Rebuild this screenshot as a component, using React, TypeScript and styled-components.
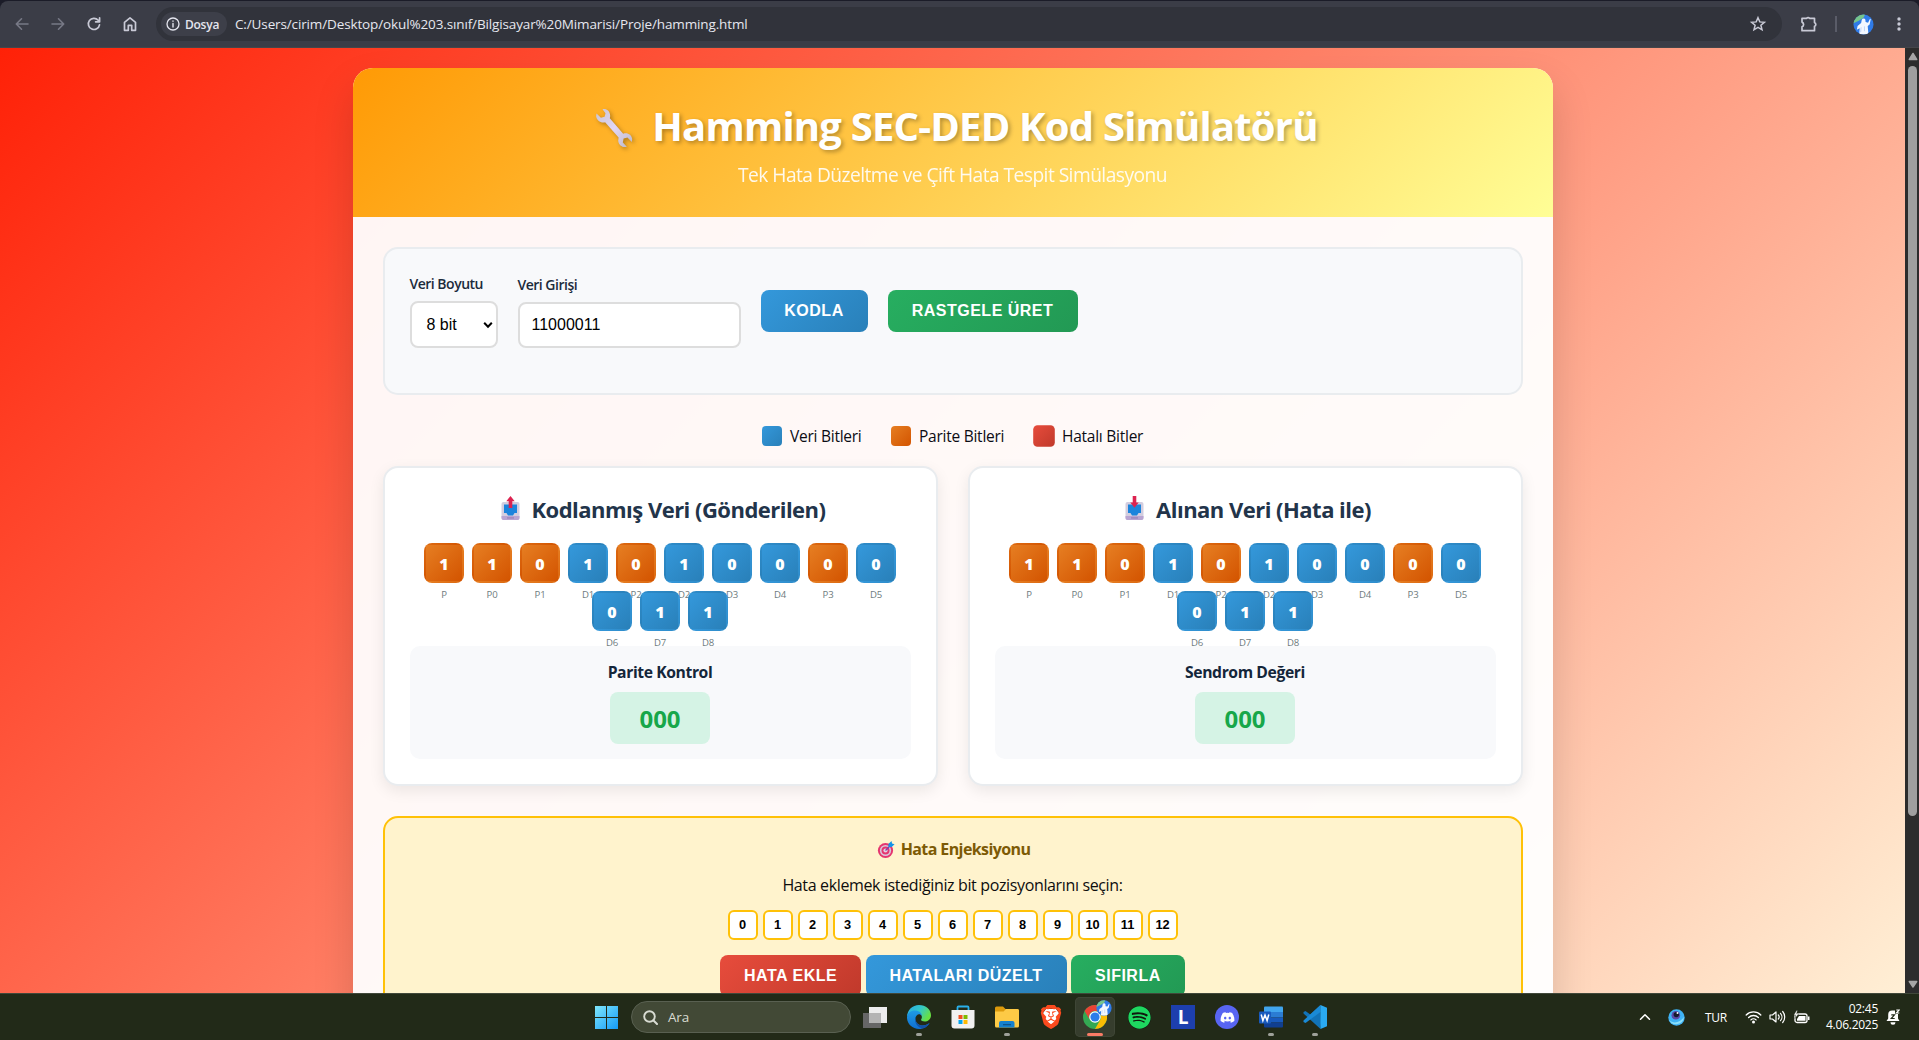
import React from "react";
import styled, { createGlobalStyle, css } from "styled-components";
import { FaSpotify, FaDiscord } from "react-icons/fa";
import { SiBrave } from "react-icons/si";

const ui = `"Open Sans", "Noto Sans", sans-serif`;
const arial = `"Liberation Sans", Arial, sans-serif`;

const blue = "linear-gradient(135deg, #3498db, #2980b9)";
const orange = "linear-gradient(135deg, #e67e22, #d35400)";
const red = "linear-gradient(135deg, #e74c3c, #c0392b)";
const green = "linear-gradient(135deg, #27ae60, #229954)";

const GlobalStyle = createGlobalStyle`
  * { box-sizing: border-box; margin: 0; padding: 0; }
  body { margin: 0; overflow: hidden; font-family: ${ui}; }
  svg { display: block; flex: none; }
`;

const Screen = styled.div`
  width: 1919px;
  height: 1040px;
  display: flex;
  flex-direction: column;
  overflow: hidden;
  background: #1b1c28;
`;

/* ---------- browser toolbar ---------- */

const BrowserBar = styled.header`
  height: 47px;
  margin-top: 1px;
  display: flex;
  align-items: center;
  background: #3b3d47;
  border-radius: 8px 8px 0 0;
  color: #c9cad6;
  border-bottom: 1px solid #45464a;
`;
const NavButtons = styled.nav`
  display: flex;
  align-items: center;
  gap: 16px;
  padding: 0 16px 0 12px;
`;
const AddressBar = styled.div`
  width: 1626px;
  height: 34px;
  border-radius: 17px;
  background: #31333b;
  display: flex;
  align-items: center;
  padding: 0 14px 0 5px;
  margin-right: 16px;
`;
const FileChip = styled.span`
  width: 66px;
  height: 24px;
  border-radius: 12px;
  background: #3d3f49;
  display: flex;
  align-items: center;
  gap: 5px;
  padding-left: 5px;
  font-size: 12px;
  font-weight: 600;
  letter-spacing: -0.25px;
  color: #e4e5ee;
`;
const Url = styled.span`
  flex: 1;
  margin-left: 8px;
  font-size: 13.5px;
  letter-spacing: -0.13px;
  color: #e6e7ef;
`;
const BarDivider = styled.i`
  width: 2px;
  height: 16px;
  margin: 0 16px 0 16px;
  background: #5a5c68;
`;
const MenuSlot = styled.span`
  margin-left: 19px;
`;

/* ---------- page ---------- */

const Viewport = styled.div`
  height: 945px;
  display: flex;
`;
const Page = styled.main`
  flex: 1;
  overflow: hidden;
  padding-top: 20px;
  background: linear-gradient(135deg, #ff2107 0%, #ffefd5 100%);
`;
const Container = styled.div`
  width: 1200px;
  height: 1250px;
  margin: 0 auto;
  border-radius: 20px;
  overflow: hidden;
  background: rgba(255, 255, 255, 0.95);
  box-shadow: 0 20px 40px rgba(0, 0, 0, 0.15);
`;
const Banner = styled.div`
  height: 149px;
  padding-top: 31px;
  background: linear-gradient(135deg, #ff9a05, #fffe96);
  color: #fff;
`;
const BannerTitle = styled.h1`
  display: flex;
  align-items: center;
  justify-content: center;
  gap: 11px;
  font-size: 40px;
  line-height: 53px;
  font-weight: 700;
  letter-spacing: -0.8px;
  text-shadow: 2px 2px 4px rgba(0, 0, 0, 0.3);
  & svg { filter: drop-shadow(2px 2px 2px rgba(0, 0, 0, 0.3)); }
`;
const BannerSubtitle = styled.p`
  margin-top: 10px;
  text-align: center;
  font-size: 19.2px;
  line-height: 26px;
  letter-spacing: -0.54px;
  opacity: 0.9;
`;
const Content = styled.div`
  padding: 30px;
`;
const Controls = styled.section`
  height: 148px;
  padding: 25px;
  border: 2px solid #e9ecef;
  border-radius: 15px;
  background: #f8f9fb;
  display: flex;
  align-items: flex-start;
  gap: 20px;
`;
const Field = styled.div<{ $w: number; $top?: number }>`
  width: ${(p) => p.$w}px;
  padding-top: ${(p) => p.$top ?? 0}px;
  display: flex;
  flex-direction: column;
  gap: 8px;
`;
const Label = styled.label`
  font-size: 14px;
  line-height: 19px;
  font-weight: 600;
  letter-spacing: -0.5px;
  color: #1c2b3c;
`;
const fieldBox = css`
  border: 2px solid #ddd;
  border-radius: 8px;
  background: #fff;
  font-family: ${arial};
  font-size: 16px;
  color: #000;
`;
const SelectBox = styled.div`
  ${fieldBox}
  height: 47px;
  padding: 0 3px 0 15px;
  display: flex;
  align-items: center;
  justify-content: space-between;
`;
const TextInput = styled.input`
  ${fieldBox}
  width: 100%;
  height: 46px;
  padding: 0 12px;
  outline: none;
`;
const Button = styled.button<{ $bg: string; $w: number; $top?: number }>`
  width: ${(p) => p.$w}px;
  height: 42px;
  margin-top: ${(p) => p.$top ?? 0}px;
  border: none;
  border-radius: 8px;
  background: ${(p) => p.$bg};
  color: #fff;
  font: 700 16px ${arial};
  letter-spacing: 0.5px;
  white-space: nowrap;
`;
const Legend = styled.div`
  height: 21px;
  margin: 30px 0 20px;
  display: flex;
  align-items: center;
  justify-content: center;
  gap: 30px;
`;
const LegendItem = styled.span<{ $w: number }>`
  width: ${(p) => p.$w}px;
  display: flex;
  align-items: center;
  gap: 8px;
  font-size: 15.5px;
  letter-spacing: -0.25px;
  white-space: nowrap;
  color: #0c0c14;
`;
const Swatch = styled.i<{ $bg: string; $pulse?: boolean }>`
  flex: none;
  width: 20px;
  height: 20px;
  border-radius: 4px;
  background: ${(p) => p.$bg};
  transform: ${(p) => (p.$pulse ? "scale(1.08)" : "none")};
`;
const Cards = styled.div`
  display: grid;
  grid-template-columns: 1fr 1fr;
  gap: 30px;
`;
const Card = styled.section`
  height: 320px;
  padding: 26px 25px 25px;
  border: 2px solid #e9ecef;
  border-radius: 15px;
  background: #fff;
  box-shadow: 0 5px 15px rgba(0, 0, 0, 0.08);
`;
const CardTitle = styled.h2`
  display: flex;
  align-items: center;
  justify-content: center;
  gap: 6px;
  font-size: 22px;
  line-height: 30px;
  font-weight: 700;
  letter-spacing: -0.52px;
  color: #22344a;
  white-space: nowrap;
`;
const Bits = styled.div`
  display: flex;
  flex-wrap: wrap;
  justify-content: center;
  gap: 8px;
  margin: 19px 0 15px;
`;
const Bit = styled.div<{ $bg: string }>`
  position: relative;
  width: 40px;
  height: 40px;
  padding-top: 2px;
  border: 2px solid transparent;
  border-radius: 8px;
  background: ${(p) => p.$bg};
  display: flex;
  align-items: center;
  justify-content: center;
  font-size: 16px;
  font-weight: 800;
  color: #fff;
`;
const BitName = styled.small`
  position: absolute;
  left: 50%;
  top: 43px;
  transform: translateX(-50%);
  font-size: 9.6px;
  line-height: 13px;
  font-weight: 400;
  letter-spacing: -0.2px;
  color: #6f7c7e;
`;
const Panel = styled.div`
  height: 113px;
  padding: 16px 15px 15px;
  border-radius: 10px;
  background: #f8f9fb;
  display: flex;
  flex-direction: column;
  align-items: center;
  gap: 9px;
`;
const PanelTitle = styled.h3`
  font-size: 15.7px;
  line-height: 21px;
  font-weight: 700;
  letter-spacing: -0.4px;
  color: #14263a;
`;
const Syndrome = styled.div`
  width: 100px;
  height: 52px;
  border-radius: 8px;
  background: #d5f3e5;
  color: #17a74a;
  font-size: 24px;
  font-weight: 700;
  line-height: 54px;
  text-align: center;
`;
const Injection = styled.section`
  height: 300px;
  margin-top: 30px;
  padding: 21px 20px 20px;
  border: 2px solid #ffc107;
  border-radius: 15px;
  background: #fff3cd;
`;
const InjectionTitle = styled.h3`
  display: flex;
  align-items: center;
  justify-content: center;
  gap: 4px;
  font-size: 16px;
  line-height: 21px;
  font-weight: 700;
  letter-spacing: -0.6px;
  color: #7d5a05;
`;
const InjectionHint = styled.p`
  margin: 15px 0 14px;
  text-align: center;
  font-size: 16px;
  line-height: 21px;
  letter-spacing: -0.36px;
  color: #0d0d0d;
`;
const Row = styled.div<{ $gap: number }>`
  display: flex;
  justify-content: center;
  gap: ${(p) => p.$gap}px;
  margin-bottom: 15px;
`;
const PositionButton = styled.button`
  width: 30px;
  height: 30px;
  border: 2px solid #ffc107;
  border-radius: 6px;
  background: #fff;
  font: 700 12.8px/24px ${arial};
  padding-bottom: 1px;
  color: #000;
`;

/* ---------- scrollbar ---------- */

const Scrollbar = styled.aside`
  width: 14px;
  background: #2c2c2c;
  display: flex;
  flex-direction: column;
  align-items: center;
  padding: 4px 0 4px 1px;
`;
const Thumb = styled.div`
  width: 9px;
  height: 750px;
  margin: 5px 0 auto;
  border-radius: 5px;
  background: #9f9f9f;
`;

/* ---------- taskbar ---------- */

const Taskbar = styled.footer`
  height: 47px;
  display: flex;
  align-items: center;
  background: #222a18;
  border-top: 1px solid #41483a;
  color: #fff;
  padding: 0 19px 0 595px;
`;
const SearchBox = styled.div`
  width: 220px;
  height: 32px;
  margin: 0 2px 0 13px;
  padding-left: 11px;
  border-radius: 16px;
  border: 1px solid #596051;
  background: #424936;
  display: flex;
  align-items: center;
  gap: 10px;
  font-size: 13.5px;
  color: #d8dbd2;
  letter-spacing: -0.2px;
`;
const AppSlot = styled.div<{ $active?: boolean }>`
  position: relative;
  width: 40px;
  height: 40px;
  margin: 0 2px;
  border-radius: 5px;
  display: flex;
  align-items: center;
  justify-content: center;
  background: ${(p) => (p.$active ? "#363d2d" : "transparent")};
  box-shadow: ${(p) => (p.$active ? "inset 0 0 0 1px #3f4636" : "none")};
`;
const RunningMark = styled.i<{ $active?: boolean }>`
  position: absolute;
  bottom: 1px;
  width: ${(p) => (p.$active ? 16 : 6)}px;
  height: 3px;
  border-radius: 2px;
  background: ${(p) => (p.$active ? "#f97c66" : "#9fa19a")};
`;
const Avatar = styled.span`
  position: absolute;
  right: 3px;
  top: 3px;
`;
const LetterTile = styled.span`
  width: 24px;
  height: 24px;
  background: #1d3fae;
  color: #fff;
  font: 700 19px/24px ${ui};
  text-align: center;
`;
const Disc = styled.span<{ $size: number; $bg: string; $fg: string }>`
  display: flex;
  align-items: center;
  justify-content: center;
  width: ${(p) => p.$size}px;
  height: ${(p) => p.$size}px;
  border-radius: 50%;
  background: ${(p) => p.$bg};
  color: ${(p) => p.$fg};
`;
const Tray = styled.div`
  margin-left: auto;
  display: flex;
  align-items: center;
`;
const TrayItem = styled.span<{ $ml: number }>`
  margin-left: ${(p) => p.$ml}px;
`;
const Language = styled.span`
  width: 22px;
  margin-left: 20px;
  font-size: 12px;
  letter-spacing: -0.3px;
`;
const Clock = styled.div`
  width: 52px;
  margin: 0 8px 0 16px;
  text-align: right;
  font-size: 12px;
  line-height: 16px;
  letter-spacing: -0.25px;
  white-space: nowrap;
`;

/* ---------- drawings ---------- */

const line = {
  fill: "none",
  stroke: "currentColor",
  strokeLinecap: "round" as const,
  strokeLinejoin: "round" as const,
};

const Face = ({ size }: { size: number }) => (
  <svg width={size} height={size} viewBox="0 0 22 22">
    <defs>
      <clipPath id={`face${size}`}><circle cx="11" cy="11" r="10.5" /></clipPath>
    </defs>
    <g clipPath={`url(#face${size})`}>
      <rect width="22" height="22" fill="#2f7be8" />
      <path d="M0 0h13l-2 4-5 3-6 3z" fill="#77c58a" />
      <path d="M9.200 6a2 2 0 0 1 3.800 0l.2 2.500 2.600.6 2-4.100.8.6-1.200 5.400-2 1.500.8 9H6.500l.5-6.500-3 1.500.8-4 3.700-3z" fill="#f3f7ff" />
      <path d="M8.500 14l-.5 5M12 13v5" stroke="#bdd3f7" />
    </g>
  </svg>
);

const Wrench = () => (
  <svg width="54" height="44" viewBox="0 0 54 44">
    <defs>
      <linearGradient id="wr" x1="0" y1="0" x2="1" y2="1">
        <stop offset="0" stopColor="#c9c4d2" />
        <stop offset=".5" stopColor="#e2d6f4" />
        <stop offset="1" stopColor="#bdb9c8" />
      </linearGradient>
    </defs>
    <path d="M15.500 5.200c4-1 8.200 2.400 7.600 7.500l-.3 1.500 13.400 15.600c4.200-1.500 8.600 1 9 5.500l-.4 2.800-4.300-4.600-3.900 1-.8 4 4 4.300c-4 1.200-8-1.500-8.600-5.800l.4-3.400L18.100 18.200c-4.200 1-8.500-1.700-9-6.300l.4-2.400 4.400 4.200 3.700-1 .9-3.500z" fill="url(#wr)" />
  </svg>
);

const Tray3D = ({ up }: { up?: boolean }) => (
  <svg width="31" height="26" viewBox="0 0 31 26">
    <rect x="6.500" y="6" width="18" height="18" rx="2" fill="#d3cddf" />
    <path d="M6.500 20h18v2a2 2 0 0 1-2 2h-14a2 2 0 0 1-2-2z" fill="#b9a5d2" />
    <path d="M9 8.500h13V17h-2.500L18 19.500h-5L11.500 17H9z" fill="#1c84dc" />
    <path d="M12 21.500h7v.9h-7z" fill="#8c74ad" />
    {up ? (
      <path d="M15.500 0l4.200 5.200h-2.400V12h-3.600V5.200h-2.400z" fill="#dc2350" />
    ) : (
      <path d="M13.700 0h3.600v6.500h2.400l-4.200 5.200-4.200-5.200h2.400z" fill="#dc2350" />
    )}
  </svg>
);

const Target = () => (
  <svg width="22" height="20" viewBox="0 0 22 20">
    <circle cx="10.500" cy="10.500" r="7.600" fill="#e5356f" />
    <circle cx="10.500" cy="10.500" r="5.600" fill="#d9c9dc" />
    <circle cx="10.500" cy="10.500" r="4" fill="#e5356f" />
    <circle cx="10.500" cy="10.500" r="2.100" fill="#e4cfe0" />
    <path d="M10.500 10.500l5-5" stroke="#7c3fb0" strokeWidth="1.300" />
    <path d="M13.300 6.800l.3-3L16.500 1l.6 2.400 2.500.8-2.900 2.900z" fill="#1593e6" />
  </svg>
);

const EdgeLogo = () => (
  <svg width="24" height="24" viewBox="0 0 24 24">
    <defs>
      <linearGradient id="e1" x1="0" y1="0" x2="1" y2=".5">
        <stop offset="0" stopColor="#2aa9e8" />
        <stop offset=".55" stopColor="#33c8c8" />
        <stop offset="1" stopColor="#67e043" />
      </linearGradient>
      <linearGradient id="e2" x1="0" y1="0" x2="0" y2="1">
        <stop offset="0" stopColor="#1e9be6" />
        <stop offset="1" stopColor="#0f6fd0" />
      </linearGradient>
    </defs>
    <path d="M0 11.500C.4 5 5.400 0 12 0c7 0 12 4.700 12 10.200 0 4-3 6.300-6.300 6.300-2.700 0-4-1.100-3.500-2.200 1.800-2.900 0-6-4-6.300C5.500 7.800 1.500 9 0 11.500z" fill="url(#e1)" />
    <path d="M0 12c.5-4.600 4.800-7.200 9-6.500 3.600.5 6 3 5.900 5.500-1-1.800-3.600-2.300-5.200-.6-3 3-.5 9.600 5.300 10 3 .2 5.300-1 7.600-2.400C20.400 21.800 16.500 24 12 24 5.200 24-.3 18.600 0 12z" fill="url(#e2)" />
    <path d="M9.600 10.400c-3 3-.5 9.600 5.400 10 3 .2 5.300-1 7.600-2.400-1.600 3-4 4.700-6.700 5.500C9.500 23 5.500 14.500 9.600 10.400z" fill="#1250a8" />
  </svg>
);

const StoreLogo = () => (
  <svg width="24" height="24" viewBox="0 0 24 24">
    <path d="M6.500 6V2.500a1 1 0 0 1 1-1h9a1 1 0 0 1 1 1V6" fill="none" stroke="#29b0ea" strokeWidth="1.800" />
    <path d="M.5 5h23v15.500a3 3 0 0 1-3 3h-17a3 3 0 0 1-3-3z" fill="#f1f1f1" />
    <path d="M7.500 10h4v4h-4z" fill="#f25022" />
    <path d="M12.500 10h4v4h-4z" fill="#7fba00" />
    <path d="M7.500 15h4v4h-4z" fill="#00a4ef" />
    <path d="M12.500 15h4v4h-4z" fill="#ffb900" />
  </svg>
);

const FolderLogo = () => (
  <svg width="24" height="24" viewBox="0 0 24 24">
    <path d="M0 3a1.500 1.500 0 0 1 1.500-1.500H8L10.500 4H22a2 2 0 0 1 2 2v3H0z" fill="#dc9a0c" />
    <path d="M0 6.500h8.500L11 4h11.500A1.500 1.500 0 0 1 24 5.500V21a1.500 1.500 0 0 1-1.500 1.500h-21A1.500 1.500 0 0 1 0 21z" fill="#fdca46" />
    <path d="M4 22.500V18a2 2 0 0 1 2-2h11.500a2 2 0 0 1 2 2v4.500z" fill="#1581cf" />
    <path d="M8 19h8v1.300H8z" fill="#0b568f" />
  </svg>
);

const ChromeLogo = () => (
  <svg width="24" height="24" viewBox="0 0 24 24">
    <circle cx="12" cy="12" r="12" fill="#34a853" />
    <path d="M1.600 6A12 12 0 0 1 22.400 6H12a6 6 0 0 0-5.200 9z" fill="#ea4335" />
    <path d="M22.400 6A12 12 0 0 1 12 24l5.200-9A6 6 0 0 0 12 6z" fill="#fbbc05" />
    <circle cx="12" cy="12" r="5.800" fill="#fff" />
    <circle cx="12" cy="12" r="4.600" fill="#2b7de9" />
  </svg>
);

const WordLogo = () => (
  <svg width="24" height="24" viewBox="0 0 24 24">
    <path d="M6 1.500h17a1 1 0 0 1 1 1V7H5V2.500a1 1 0 0 1 1-1z" fill="#41a5ee" />
    <path d="M5 7h19v5.500H5z" fill="#2b7cd3" />
    <path d="M5 12.500h19v5H5z" fill="#185abd" />
    <path d="M5 17.500h19v4a1 1 0 0 1-1 1H6a1 1 0 0 1-1-1z" fill="#103f91" />
    <rect x="0" y="6.500" width="12" height="12" rx="1" fill="#185abd" />
    <path d="M2.200 9.500l1.700 6L6 10l2.100 5.500 1.700-6" fill="none" stroke="#fff" strokeWidth="1.500" />
  </svg>
);

const CodeLogo = () => (
  <svg width="24" height="24" viewBox="0 0 24 24">
    <path d="M17.500 0L7.300 9.600 2.500 6 .5 7v1.500L17.500 24l.5-6.500z" fill="#1273b8" />
    <path d="M.5 15.500L17.500 0v7L2.500 18l-2-1z" fill="#1a8ad6" />
    <path d="M17.500 0L24 2.800v18.400L17.500 24z" fill="#2aaaf2" />
  </svg>
);

const Bell = () => (
  <svg width="14" height="16" viewBox="0 0 14 16">
    <path d="M.5 12l1.700-2.500V5.500A4 4 0 0 1 6.200 1.500H9V5h3v4.500l1.500 2.500z" fill="#fff" />
    <path d="M4.500 13.300h5a2.500 2.500 0 0 1-5 0z" fill="#fff" />
    <path d="M10.300 1h2.900l-2.900 3h3" fill="none" stroke="#fff" strokeWidth="1.100" />
    <path d="M5.300 5.800h3.200L5.300 9.500h3.400" fill="none" stroke="#222a18" strokeWidth="1.200" />
  </svg>
);

/* ---------- data ---------- */

const bits: [string, string][] = [
  ["1", "P"], ["1", "P0"], ["0", "P1"], ["1", "D1"], ["0", "P2"], ["1", "D2"], ["0", "D3"],
  ["0", "D4"], ["0", "P3"], ["0", "D5"], ["0", "D6"], ["1", "D7"], ["1", "D8"],
];

const CodeCard = ({ title, panel, up }: { title: string; panel: string; up?: boolean }) => (
  <Card>
    <CardTitle><Tray3D up={up} />{title}</CardTitle>
    <Bits>
      {bits.map(([value, name]) => (
        <Bit key={name} $bg={name[0] === "P" ? orange : blue}>
          {value}
          <BitName>{name}</BitName>
        </Bit>
      ))}
    </Bits>
    <Panel>
      <PanelTitle>{panel}</PanelTitle>
      <Syndrome>000</Syndrome>
    </Panel>
  </Card>
);

export default function App() {
  return (
    <Screen>
      <GlobalStyle />
      <BrowserBar>
        <NavButtons>
          <svg width="20" height="20" viewBox="0 0 20 20" color="#777986"><path {...line} strokeWidth="1.600" d="M16 10H4.500M9.500 4.800L4.300 10l5.200 5.200" /></svg>
          <svg width="20" height="20" viewBox="0 0 20 20" color="#777986"><path {...line} strokeWidth="1.600" d="M4 10h11.500M10.500 4.800l5.200 5.200-5.200 5.200" /></svg>
          <svg width="20" height="20" viewBox="0 0 20 20"><path {...line} strokeWidth="1.700" d="M15.500 10.800A5.600 5.600 0 1 1 14.200 6.200L15.500 7.500M15.600 3.800v4h-4" /></svg>
          <svg width="20" height="20" viewBox="0 0 20 20"><path {...line} strokeWidth="1.700" d="M4.500 8.300L10 3.900l5.500 4.400v8h-3.800v-5H8.300v5H4.500z" /></svg>
        </NavButtons>
        <AddressBar>
          <FileChip>
            <svg width="14" height="14" viewBox="0 0 14 14"><circle {...line} strokeWidth="1.300" cx="7" cy="7" r="6" /><path {...line} strokeWidth="1.400" d="M7 6.500V10M7 4v.2" /></svg>
            Dosya
          </FileChip>
          <Url>C:/Users/cirim/Desktop/okul%203.sınıf/Bilgisayar%20Mimarisi/Proje/hamming.html</Url>
          <svg width="20" height="20" viewBox="0 0 20 20"><path {...line} strokeWidth="1.500" strokeLinejoin="miter" d="M10 3.700l1.800 4.200 4.600.4-3.500 3 1.100 4.500-4-2.400-4 2.400 1.100-4.500-3.500-3 4.600-.4z" /></svg>
        </AddressBar>
        <svg width="21" height="20" viewBox="0 0 21 20"><path {...line} strokeWidth="1.700" d="M4 4.300h4.700a1.700 1.700 0 0 1 2.800 0h5v4.300a1.900 1.900 0 0 1 0 3.600v4.500H4v-3.800a2.600 2.600 0 0 0 0-4.800z" /></svg>
        <BarDivider />
        <Face size={21} />
        <MenuSlot><svg width="12" height="18" viewBox="0 0 12 18" fill="currentColor"><circle cx="6" cy="4" r="1.700" /><circle cx="6" cy="9" r="1.700" /><circle cx="6" cy="14" r="1.700" /></svg></MenuSlot>
      </BrowserBar>

      <Viewport>
        <Page>
          <Container>
            <Banner>
              <BannerTitle><Wrench />Hamming SEC-DED Kod Simülatörü</BannerTitle>
              <BannerSubtitle>Tek Hata Düzeltme ve Çift Hata Tespit Simülasyonu</BannerSubtitle>
            </Banner>
            <Content>
              <Controls>
                <Field $w={88}>
                  <Label>Veri Boyutu</Label>
                  <SelectBox>
                    8 bit
                    <svg width="10" height="8" viewBox="0 0 10 8"><path d="M1.200 1.800L5 5.800l3.800-4" fill="none" stroke="#000" strokeWidth="2" /></svg>
                  </SelectBox>
                </Field>
                <Field $w={223} $top={1}>
                  <Label>Veri Girişi</Label>
                  <TextInput defaultValue="11000011" />
                </Field>
                <Button $bg={blue} $w={107} $top={16}>KODLA</Button>
                <Button $bg={green} $w={190} $top={16}>RASTGELE ÜRET</Button>
              </Controls>

              <Legend>
                <LegendItem $w={99}><Swatch $bg={blue} />Veri Bitleri</LegendItem>
                <LegendItem $w={113}><Swatch $bg={orange} />Parite Bitleri</LegendItem>
                <LegendItem $w={109}><Swatch $bg={red} $pulse />Hatalı Bitler</LegendItem>
              </Legend>

              <Cards>
                <CodeCard up title="Kodlanmış Veri (Gönderilen)" panel="Parite Kontrol" />
                <CodeCard title="Alınan Veri (Hata ile)" panel="Sendrom Değeri" />
              </Cards>

              <Injection>
                <InjectionTitle><Target />Hata Enjeksiyonu</InjectionTitle>
                <InjectionHint>Hata eklemek istediğiniz bit pozisyonlarını seçin:</InjectionHint>
                <Row $gap={5}>
                  {bits.map((_, i) => <PositionButton key={i}>{i}</PositionButton>)}
                </Row>
                <Row $gap={4.4}>
                  <Button $bg={red} $w={141}>HATA EKLE</Button>
                  <Button $bg={blue} $w={201}>HATALARI DÜZELT</Button>
                  <Button $bg={green} $w={114}>SIFIRLA</Button>
                </Row>
              </Injection>
            </Content>
          </Container>
        </Page>
        <Scrollbar>
          <svg width="10" height="9" viewBox="0 0 10 9"><path d="M5 1.500L8.700 7.500H1.300z" fill="#a5a5a5" stroke="#a5a5a5" strokeWidth="1.500" strokeLinejoin="round" /></svg>
          <Thumb />
          <svg width="10" height="9" viewBox="0 0 10 9"><path d="M5 7L8.700 1.500H1.300z" fill="#a5a5a5" stroke="#a5a5a5" strokeWidth="1.500" strokeLinejoin="round" /></svg>
        </Scrollbar>
      </Viewport>

      <Taskbar>
        <svg width="23" height="23" viewBox="0 0 23 23">
          <defs><linearGradient id="win" x1="0" y1="0" x2="1" y2="1"><stop offset="0" stopColor="#7fe6fb" /><stop offset="1" stopColor="#149af8" /></linearGradient></defs>
          <path d="M0 0h11v11H0zM12 0h11v11H12zM0 12h11v11H0zM12 12h11v11H12z" fill="url(#win)" />
        </svg>
        <SearchBox>
          <svg width="15" height="15" viewBox="0 0 15 15"><circle {...line} strokeWidth="1.900" cx="6.500" cy="6.500" r="5.300" /><path {...line} strokeWidth="2" d="M10.500 10.500l3.500 3.500" /></svg>
          Ara
        </SearchBox>
        <AppSlot>
          <svg width="24" height="24" viewBox="0 0 24 24">
            <path d="M0 8h18v15H0z" fill="#666" />
            <path d="M6 2h18v16H6z" fill="#ededed" />
            <path d="M6 8h12v10H6z" fill="#b4b4b4" />
          </svg>
        </AppSlot>
        <AppSlot><EdgeLogo /><RunningMark /></AppSlot>
        <AppSlot><StoreLogo /></AppSlot>
        <AppSlot><FolderLogo /><RunningMark /></AppSlot>
        <AppSlot>
          <svg width="22" height="24" viewBox="0 0 22 24">
            <path d="M6 4h10l3 4-3 10-5 4-5-4L3 8z" fill="#fff" />
            <SiBrave x="-1" y="0" size={24} color="#fb4a1e" />
          </svg>
        </AppSlot>
        <AppSlot $active><ChromeLogo /><Avatar><Face size={16} /></Avatar><RunningMark $active /></AppSlot>
        <AppSlot><Disc $size={23} $bg="#10180e" $fg="#1ed760"><FaSpotify size={23} /></Disc></AppSlot>
        <AppSlot><LetterTile>L</LetterTile></AppSlot>
        <AppSlot><Disc $size={24} $bg="#5865f2" $fg="#fff"><FaDiscord size={15} /></Disc></AppSlot>
        <AppSlot><WordLogo /><RunningMark /></AppSlot>
        <AppSlot><CodeLogo /><RunningMark /></AppSlot>
        <Tray>
          <svg width="12" height="8" viewBox="0 0 12 8"><path {...line} strokeWidth="1.500" d="M1.500 6.200L6 1.800l4.500 4.400" /></svg>
          <TrayItem $ml={17}>
            <svg width="17" height="17" viewBox="0 0 17 17">
              <circle cx="8.500" cy="8.500" r="8.200" fill="#3fb2f4" />
              <path d="M1 11c4 4 11 3 15-3a8 8 0 0 1-15 3z" fill="#8be0fb" />
              <circle cx="7.800" cy="6.300" r="4.300" fill="#5a48a8" />
              <circle cx="8.300" cy="5.600" r="2.700" fill="#14182e" />
              <circle cx="9.500" cy="4" r="1" fill="#fff" />
            </svg>
          </TrayItem>
          <Language>TUR</Language>
          <TrayItem $ml={18}>
            <svg width="17" height="14" viewBox="0 0 17 14"><path {...line} strokeWidth="1.300" d="M1.200 5a10.300 10.300 0 0 1 14.600 0M3.600 7.500a7 7 0 0 1 9.800 0M5.900 9.900a3.700 3.700 0 0 1 5.200 0" /><circle cx="8.500" cy="12" r="1.500" fill="#fff" /></svg>
          </TrayItem>
          <TrayItem $ml={7}>
            <svg width="17" height="14" viewBox="0 0 17 14"><path {...line} strokeWidth="1.200" d="M1 5h2.500L7 2v10L3.500 9H1zM9.300 5a3 3 0 0 1 0 4M11.500 3.300a5.500 5.500 0 0 1 0 7.400M13.700 1.500a8.500 8.500 0 0 1 0 11" /></svg>
          </TrayItem>
          <TrayItem $ml={7}>
            <svg width="17" height="14" viewBox="0 0 17 14"><rect {...line} strokeWidth="1.300" x="2" y="4" width="12" height="8.500" rx="2" /><path d="M6 6h6.500v4.800H4V9z" fill="#fff" /><path d="M15 6.500h1.500v3.500H15z" fill="#fff" /><path d="M3.500.5L.8 5h2L2 8.500 5.800 3.800H3.600L4.500.5z" fill="#fff" stroke="#222a18" strokeWidth=".4" /></svg>
          </TrayItem>
          <Clock>02:45<br />4.06.2025</Clock>
          <Bell />
        </Tray>
      </Taskbar>
    </Screen>
  );
}
